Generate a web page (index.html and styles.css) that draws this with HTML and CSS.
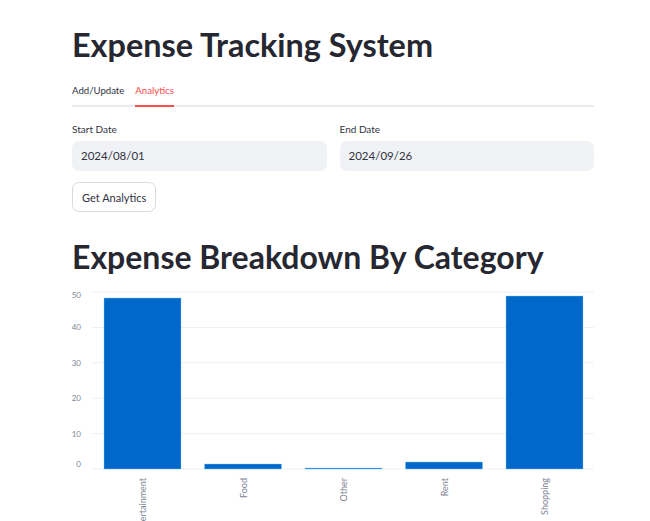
FILE: index.html
```html
<!DOCTYPE html>
<html lang="en">
<head>
    <meta charset="UTF-8">
    <meta name="viewport" content="width=device-width, initial-scale=1.0">
    <title>Expense Tracking System</title>
    <link rel="stylesheet" href="styles.css">
</head>
<body>
    <div class="main">
        <h1 class="title">Expense Tracking System</h1>

        <div class="tabs">
            <span class="tab">Add/Update</span>
            <span class="tab active">Analytics</span>
        </div>

        <div class="date-row">
            <div class="field">
                <label class="field-label">Start Date</label>
                <div class="date-input">2024/08/01</div>
            </div>
            <div class="field">
                <label class="field-label">End Date</label>
                <div class="date-input">2024/09/26</div>
            </div>
        </div>

        <button class="btn">Get Analytics</button>

        <h2 class="subtitle">Expense Breakdown By Category</h2>

        <!-- bar chart -->
        <svg class="chart" width="522" height="236" viewBox="0 0 522 236">
            <g class="grid">
                <line x1="20" y1="7" x2="522" y2="7"></line>
                <line x1="20" y1="42.4" x2="522" y2="42.4"></line>
                <line x1="20" y1="77.8" x2="522" y2="77.8"></line>
                <line x1="20" y1="113.2" x2="522" y2="113.2"></line>
                <line x1="20" y1="148.6" x2="522" y2="148.6"></line>
                <line x1="20" y1="184" x2="522" y2="184"></line>
            </g>
            <g class="y-labels">
                <text x="9" y="12.5">50</text>
                <text x="9" y="45.4">40</text>
                <text x="9" y="80.8">30</text>
                <text x="9" y="116.2">20</text>
                <text x="9" y="151.6">10</text>
                <text x="9" y="182">0</text>
            </g>
            <g class="bars">
                <rect x="32" y="13" width="77" height="171"></rect>
                <rect x="132.5" y="179" width="77" height="5"></rect>
                <rect x="233" y="183" width="77" height="1"></rect>
                <rect x="333.5" y="177" width="77" height="7"></rect>
                <rect x="434" y="11" width="77" height="173"></rect>
            </g>
            <g class="x-labels">
                <text transform="translate(74,193) rotate(-90)">Entertainment</text>
                <text transform="translate(174.5,193) rotate(-90)">Food</text>
                <text transform="translate(275,193) rotate(-90)">Other</text>
                <text transform="translate(375.5,193) rotate(-90)">Rent</text>
                <text transform="translate(476,193) rotate(-90)">Shopping</text>
            </g>
        </svg>
    </div>
</body>
</html>
```

FILE: styles.css
```css
body {
    margin: 0;
    background: #ffffff;
    color: #31333f;
    font-family: Lato, sans-serif;
    overflow: hidden;
}
.main {
    width: 522px;
    margin-left: 72px;
    padding-top: 26px;
}
.title {
    margin: 0;
    font-size: 32.4px;
    line-height: 38px;
    font-weight: 700;
    color: #262730;
}
.tabs {
    display: flex;
    gap: 11px;
    margin-top: 14px;
    border-bottom: 2px solid #e9eaee;
}
.tab {
    font-size: 9.6px;
    line-height: 14px;
    padding: 6px 0 7px;
    color: #31333f;
}
.tab.active {
    color: #ff4b4b;
    border-bottom: 2px solid #ff4b4b;
    margin-bottom: -2px;
}
.date-row {
    display: flex;
    gap: 13px;
    margin-top: 15px;
}
.field {
    flex: 1;
    display: flex;
    flex-direction: column;
}
.field-label {
    font-size: 10px;
    line-height: 14px;
    margin-bottom: 5px;
}
.date-input {
    height: 30px;
    line-height: 30px;
    padding: 0 9px;
    background: #f0f2f6;
    border-radius: 7px;
    font-size: 11.5px;
}
.btn {
    margin-top: 11px;
    height: 30px;
    padding: 0 9px;
    background: #ffffff;
    border: 1px solid #d9dadf;
    border-radius: 7px;
    font-family: Lato, sans-serif;
    font-size: 11px;
    color: #31333f;
}
.subtitle {
    margin: 26px 0 0;
    font-size: 32px;
    line-height: 38px;
    font-weight: 700;
    color: #262730;
}
.chart {
    display: block;
    margin-top: 9px;
}
.grid line {
    stroke: #eef0f3;
    stroke-width: 1;
}
.y-labels text {
    font-family: Lato, sans-serif;
    font-size: 8px;
    fill: #808495;
    text-anchor: end;
}
.bars rect {
    fill: #0068c9;
    stroke: #83c9ff;
    stroke-width: 0.4;
}
.x-labels text {
    font-family: Lato, sans-serif;
    font-size: 9px;
    fill: #808495;
    text-anchor: end;
}
```
